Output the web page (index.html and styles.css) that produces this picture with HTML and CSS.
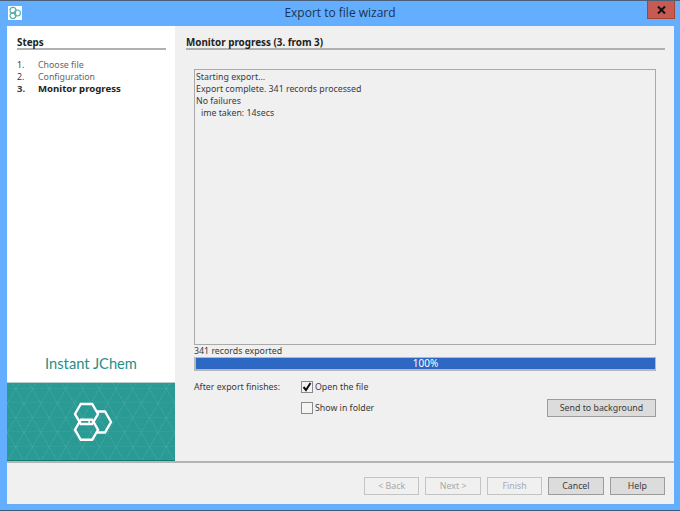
FILE: index.html
```html
<!DOCTYPE html>
<html lang="en">
<head>
<meta charset="utf-8">
<title>Export to file wizard</title>
<link rel="stylesheet" href="styles.css">
</head>
<body>
<div class="window">
  <header class="titlebar">
    <svg class="app-icon" width="14" height="14" viewBox="0 0 14 14">
      <rect width="14" height="14" fill="#fff"/>
      <g fill="none" stroke="#56b0a8" stroke-width="1.1">
        <circle cx="5" cy="4.4" r="3"/>
        <circle cx="5" cy="9.6" r="3"/>
        <circle cx="9.4" cy="7" r="3"/>
      </g>
    </svg>
    <span class="title">Export to file wizard</span>
    <div class="close">
      <svg width="9" height="8" viewBox="0 0 9 8"><path d="M1 .5 8 7.5M8 .5 1 7.5" stroke="#111" stroke-width="2" fill="none"/></svg>
    </div>
  </header>
  <div class="client">
    <div class="panes">
      <aside class="sidebar">
        <div class="steps">
          <h2 class="heading">Steps</h2>
          <ol class="step-list">
            <li class="step"><span class="num">1.</span>Choose file</li>
            <li class="step"><span class="num">2.</span>Configuration</li>
            <li class="step current"><span class="num">3.</span>Monitor progress</li>
          </ol>
        </div>
        <div class="brand">Instant JChem</div>
        <div class="logo">
          <svg width="44" height="44" viewBox="0 0 44 44">
            <g fill="none" stroke="#fff" stroke-width="2.4">
              <path d="M6 14 11.8 4H23.2L29 14 23.2 24H11.8Z"/>
              <path d="M6 29.75 11.8 19.75H23.2L29 29.75 23.2 39.75H11.8Z"/>
              <path d="M27 11.5H36L42 22 36 32.5H27"/>
              <circle cx="22" cy="22" r="2" stroke-width="1.4"/>
            </g>
          </svg>
        </div>
      </aside>
      <main class="content">
        <h2 class="heading">Monitor progress (3. from 3)</h2>
        <div class="body">
          <div class="log">
            <div>Starting export...</div>
            <div>Export complete. 341 records processed</div>
            <div>No failures</div>
            <div><span class="faint">T</span>ime taken: 14secs</div>
          </div>
          <div class="status">341 records exported</div>
          <div class="progress"><div class="fill">100%</div></div>
          <div class="options">
            <span class="opt-label">After export finishes:</span>
            <div class="opt-col">
              <label class="check"><span class="box on"><svg width="10" height="10" viewBox="0 0 10 10"><path d="M1.5 5 4 8 8.5 1" fill="none" stroke="#111" stroke-width="2"/></svg></span>Open the file</label>
              <label class="check"><span class="box"></span>Show in folder</label>
            </div>
            <button class="btn send" type="button">Send to background</button>
          </div>
        </div>
      </main>
    </div>
    <footer class="footer">
      <button class="btn nav" type="button" disabled>&lt; Back</button>
      <button class="btn nav" type="button" disabled>Next &gt;</button>
      <button class="btn nav" type="button" disabled>Finish</button>
      <button class="btn nav" type="button">Cancel</button>
      <button class="btn nav" type="button">Help</button>
    </footer>
  </div>
</div>
</body>
</html>
```
FILE: styles.css
```css
* { box-sizing: border-box; }
html, body { margin: 0; padding: 0; }
body { font: 8.8px/12px "Noto Sans", "DejaVu Sans", sans-serif; color: #3a3a3a; }
.window {
  width: 680px; height: 511px; background: #63aeff;
  border-top: 1px solid #4a5f78; border-bottom: 1px solid #3d5872;
  display: flex; flex-direction: column; position: relative;
}
.titlebar { height: 25px; display: flex; align-items: center; justify-content: center; flex: none; }
.app-icon { position: absolute; left: 8px; top: 5px; }
.title { font: 12px/16px "Open Sans", sans-serif; color: #1d3350; margin-top: -1px; }
.close {
  position: absolute; left: 647px; top: 0; width: 28px; height: 18px;
  background: #c75a52; border: 1px solid #a8452f; border-top: 0;
  display: flex; align-items: center; justify-content: center;
}
.client { flex: 1; margin: 0 6px 6px 7px; background: #f0f0f0; display: flex; flex-direction: column; min-height: 0; }
.panes { flex: 1; display: flex; min-height: 0; border-bottom: 2px solid #b4b4b4; }
.sidebar { width: 168px; background: #fff; display: flex; flex-direction: column; flex: none; }
.steps { padding: 8px 9px 0 10px; flex: 1; }
.heading {
  margin: 0; font-size: 9.85px; line-height: 12px; font-weight: 700; color: #222;
  border-bottom: 2px solid #b0b0b0; padding-top: 2px;
}
.step-list { list-style: none; margin: 9px 0 0; padding: 0; }
.step { height: 12px; color: #666; display: flex; }
.step.current { font-size: 9.6px; font-weight: 700; color: #222; }
.num { width: 21px; flex: none; color: #3a3a3a; }
.brand { font: 14.7px/18px Lato, sans-serif; color: #1f8f88; text-align: center; padding: 0 0 10px; }
.logo {
  height: 79px; flex: none; display: flex; align-items: center; justify-content: center;
  background-color: #2a9a94;
  background-image:
    repeating-linear-gradient(60deg, transparent 0 13.5px, rgba(255,255,255,.07) 13.5px 14.5px),
    repeating-linear-gradient(-60deg, transparent 0 13.5px, rgba(255,255,255,.07) 13.5px 14.5px),
    repeating-linear-gradient(0deg, transparent 0 13.5px, rgba(255,255,255,.04) 13.5px 14.5px);
  border-top: 1px solid #b9cfcd; border-bottom: 1px solid #147a74;
}
.content { flex: 1; padding: 8px 9px 0 11px; display: flex; flex-direction: column; min-width: 0; }
.body { margin-top: 19px; padding: 0 9px 0 8px; display: flex; flex-direction: column; flex: 1; }
.log { height: 276px; border: 1px solid #a9a9a9; padding: 1px; }
.faint { color: #f6f6f6; }
.status { height: 12px; line-height: 12px; }
.progress { height: 14px; background: #b8b8b8; padding: 1px 1px 2px 2px; }
.fill { height: 100%; background: #2d68c4; color: #fff; font-size: 10px; text-align: center; line-height: 11px; }
.options { display: flex; margin-top: 10px; }
.opt-label { width: 107px; flex: none; line-height: 12px; }
.opt-col { display: flex; flex-direction: column; gap: 9px; flex: 1; }
.check { display: flex; align-items: center; gap: 2px; height: 12px; }
.box { width: 12px; height: 12px; border: 1px solid #8a8a8a; background: #f4f4f4; display: flex; align-items: center; justify-content: center; }
.btn {
  font: 8.8px/12px "Noto Sans", "DejaVu Sans", sans-serif; color: #3a3a3a;
  height: 18px; padding: 0; background: #dcdcdc; border: 1px solid #9c9c9c;
}
.btn:disabled { background: #f0f0f0; color: #a8a8a8; border-color: #c4c4c4; }
.send { width: 109px; align-self: flex-start; margin-top: 18px; }
.footer { height: 41px; flex: none; display: flex; justify-content: flex-end; gap: 6px; padding: 14px 9px 0 0; }
.nav { width: 55.4px; }
```
